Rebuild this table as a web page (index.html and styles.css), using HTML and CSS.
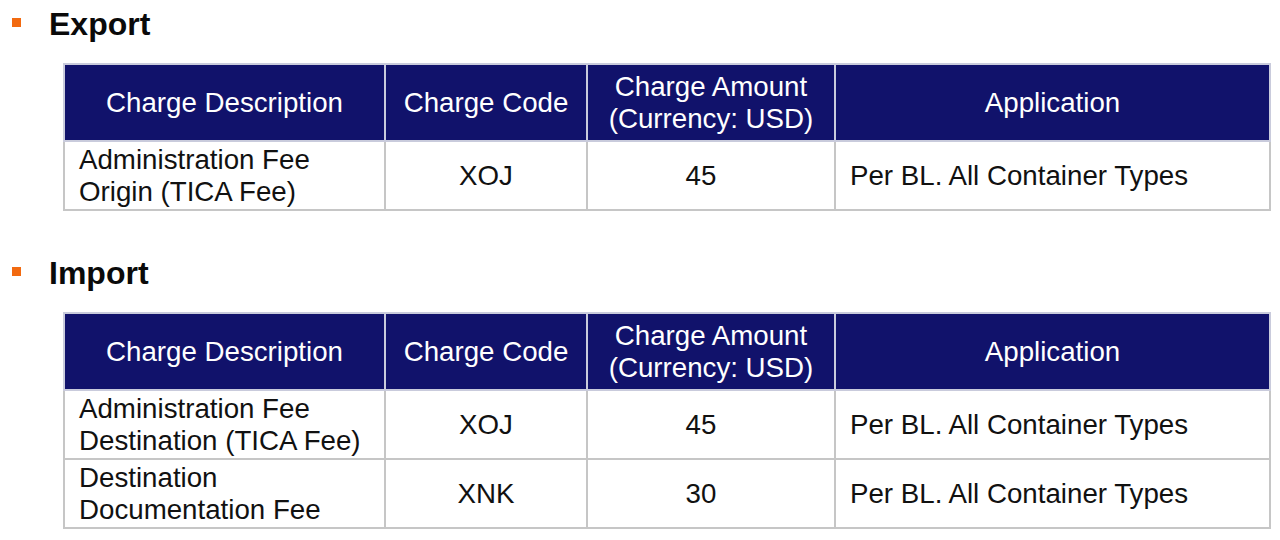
FILE: index.html
```html
<!DOCTYPE html>
<html lang="en">
<head>
<meta charset="utf-8">
<title>Charges</title>
<link rel="stylesheet" href="styles.css">
</head>
<body>
<section class="section">
  <h2 class="title"><span class="bullet"></span>Export</h2>
  <table class="charges">
    <colgroup><col class="c1"><col class="c2"><col class="c3"><col class="c4"></colgroup>
    <thead>
      <tr><th>Charge Description</th><th>Charge Code</th><th>Charge Amount<br>(Currency: USD)</th><th>Application</th></tr>
    </thead>
    <tbody>
      <tr><td class="desc">Administration Fee<br>Origin (TICA Fee)</td><td class="ctr">XOJ</td><td class="ctr amount">45</td><td class="app">Per BL. All Container Types</td></tr>
    </tbody>
  </table>
</section>
<section class="section second">
  <h2 class="title"><span class="bullet"></span>Import</h2>
  <table class="charges">
    <colgroup><col class="c1"><col class="c2"><col class="c3"><col class="c4"></colgroup>
    <thead>
      <tr><th>Charge Description</th><th>Charge Code</th><th>Charge Amount<br>(Currency: USD)</th><th>Application</th></tr>
    </thead>
    <tbody>
      <tr><td class="desc">Administration Fee<br>Destination (TICA Fee)</td><td class="ctr">XOJ</td><td class="ctr amount">45</td><td class="app">Per BL. All Container Types</td></tr>
      <tr><td class="desc">Destination<br>Documentation Fee</td><td class="ctr">XNK</td><td class="ctr amount">30</td><td class="app">Per BL. All Container Types</td></tr>
    </tbody>
  </table>
</section>
</body>
</html>
```
FILE: styles.css
```css
html, body {
  margin: 0;
  padding: 0;
  background: #ffffff;
}
body {
  font-family: "Liberation Sans", Arial, sans-serif;
  color: #111111;
}
.section {
  padding-top: 4px;
}
.second {
  padding-top: 42px;
}
.title {
  display: flex;
  align-items: flex-start;
  margin: 0;
  font-size: 32px;
  font-weight: bold;
  line-height: 40px;
  height: 40px;
  color: #0a0a0a;
}
.bullet {
  display: block;
  width: 9px;
  height: 9px;
  background: #f26a10;
  margin: 14px 28px 0 12px;
}
.charges {
  margin: 19px 0 0 63px;
  width: 1206px;
  table-layout: fixed;
  border-collapse: collapse;
  font-size: 27.7px;
}
.c1 { width: 321px; }
.c2 { width: 202px; }
.c3 { width: 248px; }
.c4 { width: 435px; }
.charges th,
.charges td {
  border: 2px solid #c6c6c6;
  padding: 0 14px;
  vertical-align: middle;
  line-height: 32px;
}
.charges thead tr {
  height: 77px;
}
.charges th {
  background: #11126b;
  color: #ffffff;
  font-weight: normal;
  text-align: center;
  border-color: #c9cbdc;
}
.charges tbody tr {
  height: 69px;
}
.charges td.desc,
.charges td.app {
  text-align: left;
}
.charges td.ctr {
  text-align: center;
}
.charges td.amount {
  padding-right: 34px;
}
```
